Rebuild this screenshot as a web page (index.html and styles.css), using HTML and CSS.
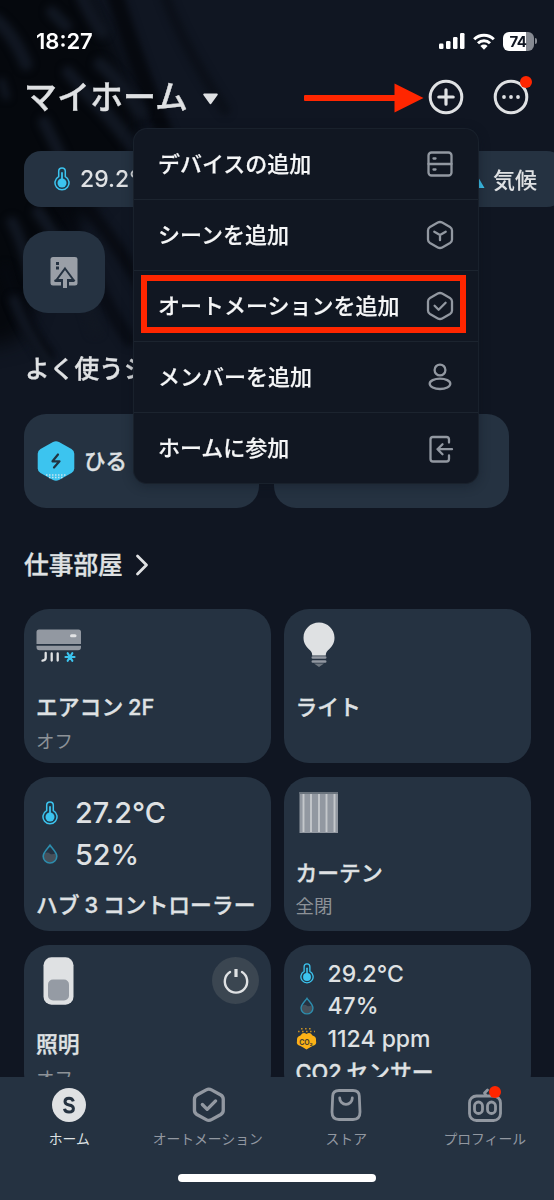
FILE: index.html
```html
<!DOCTYPE html>
<html lang="ja">
<head>
<meta charset="utf-8">
<title>マイホーム</title>
<link rel="stylesheet" href="styles.css">
</head>
<body>
<svg class="defs" width="0" height="0">
  <symbol id="thermo" viewBox="0 0 16 24">
    <path d="M4.7 9.6V4.3a3.3 3.3 0 0 1 6.6 0v5.3a7 7 0 1 1-6.6 0z" fill="#203747" stroke="#3cc4ef" stroke-width="1.5"/>
    <path d="M8 6v9" stroke="#3cc4ef" stroke-width="1.8" stroke-linecap="round"/>
    <circle cx="8" cy="16" r="4.5" fill="#3cc4ef"/>
  </symbol>
  <symbol id="drop" viewBox="0 0 16 20">
    <path d="M8 1.2C6 4.2 1.2 8.500 1.200 12.200a6.800 6.800 0 0 0 13.600 0C14.800 8.500 10 4.200 8 1.200z" fill="#253241"/>
    <path d="M2.500 9.500c2.500-1.500 4-1 5.500.2s3.500.6 5.500-.5c2.600 5-.5 9.300-5.500 9.300s-8.300-4-5.500-9z" fill="#46505a"/>
    <path d="M8 1.200C6 4.200 1.200 8.500 1.200 12.200a6.800 6.800 0 0 0 13.600 0C14.800 8.500 10 4.200 8 1.200z" fill="none" stroke="#2d8dad" stroke-width="1.600"/>
  </symbol>
  <symbol id="hexcheck" viewBox="0 0 28 30">
    <path d="M11.800 2.600Q14 1.400 16.200 2.600L24 6.900Q26 8.100 26 10.400V19.600Q26 21.900 24 23.100L16.200 27.400Q14 28.600 11.800 27.400L4 23.100Q2 21.900 2 19.600V10.400Q2 8.100 4 6.900Z"/>
    <path d="M8.600 14.800l4 4 7-7"/>
  </symbol>
</svg>
<div class="screen">
  <svg class="backdrop" viewBox="0 0 554 460" width="554" height="460">
    <defs>
      <filter id="soft" x="-20%" y="-20%" width="140%" height="140%" color-interpolation-filters="sRGB"><feGaussianBlur stdDeviation="10"/></filter>
      <filter id="leafsoft" x="-40%" y="-40%" width="180%" height="180%" color-interpolation-filters="sRGB"><feGaussianBlur stdDeviation="3.5"/></filter>
    </defs>
    <path d="M-30-30H75L115 50 140 110 140 150 95 200 50 260 20 340-30 350z" fill="#05080d" filter="url(#soft)"/>
    <g fill="none" stroke="#06090f" stroke-width="15" stroke-linecap="round" filter="url(#leafsoft)">
      <path d="M115-5Q135 60 165 135" stroke-width="17"/>
      <path d="M165-5Q180 40 225 110" stroke-width="11" opacity=".5"/>
      <path d="M85 205Q115 240 150 300" stroke-width="13" opacity=".8"/>
      <path d="M60 200Q100 300 130 340" stroke-width="14" opacity=".7"/>
      <path d="M5 270Q20 320 48 355" stroke-width="13" opacity=".9"/>
    </g>
    <g fill="none" stroke="#111722" stroke-width="12" stroke-linecap="round" filter="url(#leafsoft)">
      <path d="M-4 20Q14 35 26 64" stroke-width="13"/>
      <path d="M52 12L66 26"/>
      <path d="M82-4Q92 18 102 32" stroke-width="13"/>
      <path d="M68 72L82 88"/>
      <path d="M100 64Q118 78 140 112" stroke-width="13"/>
      <path d="M84 90Q105 110 132 145" stroke-width="14"/>
      <path d="M44 122Q56 145 66 168" stroke-width="12"/>
      <path d="M2 82L6 96" stroke-width="8"/>
      <path d="M12 222Q22 240 30 275" stroke-width="11"/>
      <path d="M14 300Q25 330 48 362" stroke-width="10"/>
      <path d="M38 212Q75 260 95 330" stroke-width="12"/>
    </g>
  </svg>

  <div class="status">
    <span class="clock">18:27</span>
    <span class="indicators">
      <svg width="27" height="18" viewBox="0 0 27 18" fill="#fff"><rect x="1" y="11.500" width="4.500" height="5.500" rx="1.200"/><rect x="8" y="9" width="4.500" height="8" rx="1.200"/><rect x="15" y="5" width="4.500" height="12" rx="1.200"/><rect x="22" y="1" width="4.500" height="16" rx="1.200"/></svg>
      <svg width="22" height="17" viewBox="0 0 22 17" fill="none" stroke="#fff" stroke-width="3"><path d="M1.200 6.200a14 14 0 0 1 19.600 0"/><path d="M5 10.200a8.600 8.600 0 0 1 12 0"/><path d="M11 16.700l-3.600-3.700a5.200 5.200 0 0 1 7.200 0z" fill="#fff" stroke="none"/></svg>
      <span class="battery"><span class="cell">74</span><i></i></span>
    </span>
  </div>

  <header class="top">
    <h1>マイホーム</h1>
    <svg class="caret" width="17" height="12" viewBox="0 0 17 12"><path d="M2.200 1.500H14.800L8.500 10.200z" fill="#dfe1e3" stroke="#dfe1e3" stroke-width="2" stroke-linejoin="round"/></svg>
    <svg class="arrow" width="120" height="30" viewBox="0 0 120 30" fill="#ff2600"><rect x="0" y="12" width="92" height="6" rx="1"/><path d="M90.500 .5L119.500 15 90.500 29.500z"/></svg>
    <svg width="36" height="36" viewBox="0 0 36 36" fill="none" stroke="#dfe1e3"><circle cx="18" cy="18" r="15.800" stroke-width="3"/><path d="M18 10.800v14.400M10.800 18h14.400" stroke-width="3.200" stroke-linecap="round"/></svg>
    <span class="more">
      <svg width="36" height="36" viewBox="0 0 36 36"><circle cx="18" cy="18" r="15.800" stroke-width="3" fill="none" stroke="#dfe1e3"/><g fill="#dfe1e3"><circle cx="11" cy="18" r="1.900"/><circle cx="18" cy="18" r="1.900"/><circle cx="25" cy="18" r="1.900"/></g></svg>
      <i class="dot"></i>
    </span>
  </header>

  <div class="chips">
    <div class="chip"><svg width="16" height="24"><use href="#thermo"/></svg><span>29.2°C</span></div>
    <div class="chip climate"><svg width="22" height="20" viewBox="0 0 22 20"><path d="M9 1l10.500 18H.5z" fill="#3cc4ef"/></svg><span>気候</span></div>
  </div>

  <div class="tile">
    <svg width="28" height="33" viewBox="0 0 28 33">
      <path d="M3 1H25Q27.500 1 27.500 3V27.500Q27.500 29.500 25 29.500H3Q.5 29.500.5 27V3.500Q.5 1 3 1z" fill="#9a9fa7"/>
      <path d="M6 6h3v3H6zM6 10.500h3v3H6z" fill="#253241"/>
      <path d="M15 12.500L23.500 24H18V32.500h-6V24H6.500z" fill="#9a9fa7" stroke="#253241" stroke-width="2"/>
      <path d="M11 24.800h-5.500M19 24.800h4.500" stroke="#253241" stroke-width="2.600" stroke-linecap="round"/>
      <path d="M13 18h4v14h-4z" fill="#9a9fa7"/>
    </svg>
  </div>

  <h2 class="scenes-title">よく使うシーン</h2>
  <div class="scenes">
    <div class="scene">
      <svg width="38" height="42" viewBox="0 0 38 42"><path d="M16 2Q19 .4 22 2L34.500 9Q37.300 10.700 37.300 13.800V28.200Q37.300 31.300 34.500 33L22 40Q19 41.600 16 40L3.500 33Q.7 31.300.7 28.200V13.800Q.7 10.700 3.500 9z" fill="#3cc4ef"/><path d="M9 35h20M12 37.500h14" stroke="#c2e4f0" stroke-width="1.500" stroke-dasharray="1.500 1.500"/><path d="M21 14.500l-5.500 6.800h7L17 27.500" fill="none" stroke="#203442" stroke-width="2.200" stroke-linecap="round" stroke-linejoin="round"/></svg>
      <span>ひる</span>
    </div>
    <div class="scene"></div>
  </div>

  <h2 class="room-title">仕事部屋 <svg width="14" height="22" viewBox="0 0 14 22"><path d="M2.500 2l9 9-9 9" fill="none" stroke="#dfe1e3" stroke-width="2.800" stroke-linecap="round" stroke-linejoin="round"/></svg></h2>

  <div class="devices">
    <article class="card">
      <div class="art">
        <svg class="ac" width="46" height="34" viewBox="0 0 46 34">
          <path d="M3 .5H42.500Q45 .5 45 3V15H.5V3Q.5.500 3 .5zM.5 16.800H45V18Q45 21.300 42 21.300H3.500Q.5 21.300.5 18z" fill="#9298a1"/>
          <rect x="34" y="5.300" width="6.500" height="3" rx="1.500" fill="#e2e3e5"/>
          <path d="M9.700 24v5q0 2-3.200 2.700M15.700 24.500v7M21.700 24.500v7" fill="none" stroke="#dfe1e3" stroke-width="2.300" stroke-linecap="round"/>
          <path d="M29.500 28h9M31.700 24.200l4.600 7.600M36.300 24.200l-4.600 7.600" stroke="#3cc4ef" stroke-width="2.200" stroke-linecap="round"/>
        </svg>
      </div>
      <h3>エアコン <b>2F</b></h3><p>オフ</p>
    </article>

    <article class="card">
      <div class="art">
        <svg class="bulb" width="32" height="45" viewBox="0 0 32 45">
          <path d="M16 .5C7.400.5.5 7.200.5 15.700.5 22 4 25.500 7 28.300 9.200 30.400 9 31.500 9.200 33.500H22.800C23 31.500 22.800 30.400 25 28.300 28 25.500 31.500 22 31.500 15.700 31.500 7.200 24.600.5 16 .5z" fill="#dfe1e3"/>
          <path d="M9.800 35.500h12.400M9.800 39.500h12.400" stroke="#9298a1" stroke-width="2.600" stroke-linecap="round"/><path d="M11 41.500h10l-5 3.500z" fill="#6f7780"/>
        </svg>
      </div>
      <h3>ライト</h3>
    </article>

    <article class="card meter">
      <div class="reading"><svg width="16" height="24"><use href="#thermo"/></svg><span>27.2°C</span></div>
      <div class="reading"><svg width="16" height="20"><use href="#drop"/></svg><span>52%</span></div>
      <h3>ハブ <b class="n">3</b> コントローラー</h3>
    </article>

    <article class="card curtain">
      <div class="art">
        <svg width="40" height="41" viewBox="0 0 40 41"><path d="M.5 0h38.500v41H.5z" fill="#9298a1"/><path d="M.5 1h38.500" stroke="#6b747e" stroke-width="2"/><path d="M4.500 2v38M12 2v38M20 2v38M27.500 2v38M35.500 2v38" stroke="#c4c7cb" stroke-width="1.900"/></svg>
      </div>
      <h3>カーテン</h3><p>全閉</p>
    </article>

    <article class="card lamp">
      <div class="art">
        <svg width="31" height="48" viewBox="0 0 31 48"><rect x=".5" y=".3" width="30" height="47.400" rx="8" fill="#dfe1e3"/><rect x="5" y="22.500" width="21" height="21" rx="5" fill="#959ba4"/></svg>
        <span class="power"><svg width="28" height="28" viewBox="0 0 28 28" fill="none" stroke="#dfe1e3" stroke-width="2.400"><path d="M8 5a11.200 11.200 0 1 0 12 0" stroke-linecap="round"/><path d="M14 2v8" stroke-width="3.200"/></svg></span>
      </div>
      <h3>照明</h3><p>オフ</p>
    </article>

    <article class="card air">
      <div class="reading"><svg width="14" height="21"><use href="#thermo"/></svg><span>29.2°C</span></div>
      <div class="reading"><svg width="14" height="18"><use href="#drop"/></svg><span>47%</span></div>
      <div class="reading"><svg class="co2" width="21" height="22" viewBox="0 0 21 22"><path d="M4.500 7.500Q7 3.500 10.500 6 14 3.500 16.500 7.500 20.500 8.500 20 12.500 21 17 16.500 18 14 19 10.500 21.500 7 19 4.500 18 0 17 1 12.500.500 8.500 4.500 7.500z" fill="#fbb117"/><path d="M2 3.500h17M5 .8h12" stroke="#c48d25" stroke-width="1.600" stroke-dasharray="1.600 2.400"/><text x="3.200" y="16.500">CO₂</text></svg><span>1124 ppm</span></div>
      <h3><b>CO2</b> センサー</h3>
    </article>
  </div>

  <nav class="tabs">
    <a class="on"><svg width="36" height="36" viewBox="0 0 36 36"><circle cx="18" cy="18" r="17" fill="#dfe1e3"/><path d="M22.300 14.300Q21.500 11.200 18 11.200 14 11.200 14 14.500 14 17.300 18 17.900 22.400 18.500 22.400 21.500 22.400 25 18 25 14 25 13.500 21.700" fill="none" stroke="#253241" stroke-width="3"/></svg><span>ホーム</span></a>
    <a><svg class="line" width="36" height="36" viewBox="-.7 .2 29.500 29.500"><use href="#hexcheck"/></svg><span>オートメーション</span></a>
    <a><svg class="line" width="36" height="36" viewBox="0 0 36 36"><path d="M11 3.500H25Q31 3.500 31.300 9L32 25Q32 32.500 25 32.500H11Q4 32.500 4 25L4.700 9Q5 3.500 11 3.500z"/><path d="M11.700 11a6.300 6.300 0 0 0 12.600 0"/></svg><span>ストア</span></a>
    <a><svg class="line" width="36" height="36" viewBox="0 0 36 36"><rect x="2.500" y="9" width="31" height="24.500" rx="7"/><rect x="7.500" y="15" width="8" height="11.500" rx="4"/><rect x="20.500" y="15" width="8" height="11.500" rx="4"/><path d="M19 8.500l-1.500-2.500 3-3"/></svg><i class="dot"></i><span>プロフィール</span></a>
    <div class="home-bar"></div>
  </nav>

  <div class="menu">
    <div class="item"><span>デバイスの追加</span><svg width="28" height="30" viewBox="0 0 28 30"><rect x="2.500" y="3.500" width="23" height="23" rx="3"/><path d="M2.500 15h23M7.500 9.500h2M7.500 20.500h2"/></svg></div>
    <div class="item"><span>シーンを追加</span><svg width="28" height="30" viewBox="0 0 28 30"><path d="M11.800 2.600Q14 1.400 16.200 2.600L24 6.900Q26 8.100 26 10.400V19.600Q26 21.900 24 23.100L16.200 27.400Q14 28.600 11.800 27.400L4 23.100Q2 21.900 2 19.600V10.400Q2 8.100 4 6.900Z"/><path d="M8.300 11.700L14 15l5.700-3.300M14 15v5.200"/></svg></div>
    <div class="item picked"><span>オートメーションを追加</span><svg width="28" height="30"><use href="#hexcheck"/></svg></div>
    <div class="item"><span>メンバーを追加</span><svg width="28" height="30" viewBox="0 0 28 30"><circle cx="14" cy="8" r="5.400"/><ellipse cx="14" cy="21.800" rx="10.300" ry="5.200"/></svg></div>
    <div class="item"><span>ホームに参加</span><svg width="28" height="30" viewBox="0 0 28 30"><path d="M23 8.500V5.500Q23 3 20.500 3H7Q4.500 3 4.500 5.500V25Q4.500 27.500 7 27.500H20.500Q23 27.500 23 25V21.500M26 15.200H11.500M16.500 10.200l-5 5 5 5"/></svg></div>
  </div>
</div>
</body>
</html>
```
FILE: styles.css
```css
*, *::after { box-sizing: border-box; margin: 0; padding: 0; }
body {
  background: #101622;
  font-family: Inter, "Noto Sans CJK JP", sans-serif;
  font-weight: 500;
  color: #dfe1e3;
}
svg { display: block; flex: none; }
i { display: block; }
b { font-weight: 500; }
.defs { position: absolute; }

.screen {
  position: relative;
  width: 554px;
  height: 1200px;
  overflow: hidden;
  background: #101622;
  display: flex;
  flex-direction: column;
}
.screen > * { flex: none; position: relative; }
.screen > .backdrop { position: absolute; left: 0; top: 0; }

.status {
  height: 66px;
  padding: 16px 17px 0 36px;
  display: flex;
  justify-content: space-between;
  align-items: center;
  color: #fff;
}
.clock { font-size: 22px; font-weight: 600; }
.indicators { display: flex; align-items: center; gap: 8px; }
.battery { display: flex; align-items: center; gap: 1px; }
.cell {
  width: 31px;
  height: 19px;
  border-radius: 6px;
  background: linear-gradient(90deg, #fff 74%, #868a92 74%);
  color: #101622;
  font-size: 15px;
  font-weight: 700;
  letter-spacing: -0.6px;
  line-height: 19px;
  padding-right: 1px;
  text-align: center;
}
.battery i { width: 2px; height: 6px; border-radius: 0 2px 2px 0; background: #868a92; }

.top {
  height: 62px;
  padding: 0 25px 0 24px;
  display: flex;
  align-items: center;
}
h1, h2, h3, .scene { -webkit-text-stroke: 0.35px #dfe1e3; }
h1 { font-size: 33px; font-weight: 500; line-height: 48px; width: 178px; white-space: nowrap; }
.caret { margin-top: 4px; }
.arrow { margin: 1px 4px 0 auto; }
.top > svg:nth-of-type(3), .more { margin-top: -1px; }
.more { position: relative; margin-left: 29px; }
.dot { position: absolute; width: 12px; height: 12px; border-radius: 50%; background: #ff2600; }
.more .dot { left: 27px; top: -3px; }

.chips { display: flex; margin: 23px 0 0 24px; height: 56px; gap: 12px; }
.chip {
  flex: none;
  width: 210px;
  display: flex;
  align-items: center;
  gap: 10px;
  padding-left: 30px;
  border-radius: 17px;
  background: #253241;
  font-size: 23px;
}
.climate { width: 318px; padding-left: 219px; gap: 6px; font-size: 22px; }
.climate span { margin-top: -3px; }

.tile {
  width: 82px;
  height: 82px;
  margin: 24px 0 0 23px;
  border-radius: 25px;
  background: #253241;
  display: flex;
  align-items: center;
  justify-content: center;
}
h2 { font-size: 24.700px; font-weight: 500; line-height: 36px; white-space: nowrap; }
.scenes-title { width: 112px; overflow: hidden; margin: 38px 0 0 25px; }
.scenes { display: flex; gap: 15px; margin: 27px 0 0 24px; }
.scene {
  width: 235px;
  height: 94px;
  padding-left: 13px;
  border-radius: 22px;
  background: #253241;
  display: flex;
  align-items: center;
  gap: 9px;
  font-size: 21.500px;
}
.scene span { margin-top: -3px; }
.room-title { display: flex; align-items: center; gap: 12px; margin: 39px 0 0 24px; }

.devices {
  display: grid;
  grid-template-columns: 247px 247px;
  grid-auto-rows: 153.500px;
  gap: 14.700px 12.500px;
  margin: 26px 0 0 24px;
}
.card { padding: 0 12px; border-radius: 25px; background: #253241; }
.art { height: 83px; display: flex; align-items: flex-start; justify-content: space-between; }
h3 { font-size: 21.800px; font-weight: 500; line-height: 30px; white-space: nowrap; word-spacing: -1px; }
.card p { margin-top: 5px; font-size: 18.500px; font-weight: 400; line-height: 28px; color: #8d9298; }
.ac { margin-top: 20px; }
.bulb { margin: 13px 0 0 7px; }
.curtain .art { height: 81px; padding: 15px 0 0 3px; }
.curtain p { margin-top: 4px; }
.lamp .art { height: 84px; padding: 12px 0 0 7px; }
.power {
  width: 47px;
  height: 47px;
  border-radius: 50%;
  background: #3b4651;
  display: flex;
  align-items: center;
  justify-content: center;
}
.reading { display: flex; align-items: center; white-space: nowrap; }
.meter { padding-top: 15px; }
.meter .reading { height: 41.500px; padding-left: 6px; gap: 17px; font-size: 28.800px; }
.meter h3 { margin-top: 15px; }
.air { padding-top: 12px; }
.air .reading { height: 32.500px; padding-left: 4px; gap: 14px; font-size: 23px; }
.air .co2 { margin: 0 -3.500px; }
.co2 text { font: 700 7px Inter, sans-serif; fill: #4a4230; }
.air h3 { margin-top: 2px; }

.screen > .tabs {
  position: absolute;
  left: 0;
  right: 0;
  bottom: 0;
  height: 123px;
  padding-top: 10px;
  display: grid;
  grid-template-columns: repeat(4, 1fr);
  background: #253241;
}
.tabs a {
  position: relative;
  display: flex;
  flex-direction: column;
  align-items: center;
  font-size: 13.800px;
  font-weight: 400;
  line-height: 20px;
  gap: 6px;
  color: #9298a1;
}
.tabs .on { color: #dfe1e3; }
.tabs .dot { left: 73px; top: -1px; }
.line { fill: none; stroke: #9298a1; stroke-width: 2.800; stroke-linecap: round; stroke-linejoin: round; }
.home-bar { grid-column: 1 / -1; justify-self: center; width: 198px; height: 8px; margin-top: 6px; border-radius: 4px; background: #fff; }

.screen > .menu {
  position: absolute;
  left: 134px;
  top: 129px;
  width: 344px;
  height: 354px;
  border-radius: 13px;
  background: #111722;
  box-shadow: 0 0 0 1px #19212c, 0 2px 12px rgba(12, 18, 28, .45);
}
.item {
  position: relative;
  height: 71px;
  padding: 0 24px;
  display: flex;
  align-items: center;
  justify-content: space-between;
  font-size: 22px;
  color: #f5f6f7;
  border-bottom: 1px solid #1c242f;
}
.item:last-child { border-bottom: 0; }
.item span { margin-top: -5px; -webkit-text-stroke: 0.2px #f5f6f7; }
.item svg { fill: none; stroke: #9298a1; stroke-width: 2.300; stroke-linecap: round; stroke-linejoin: round; }
.picked::after {
  content: "";
  position: absolute;
  left: 7px;
  top: 4px;
  width: 325px;
  height: 58px;
  border: 6px solid #ff2600;
}
```
